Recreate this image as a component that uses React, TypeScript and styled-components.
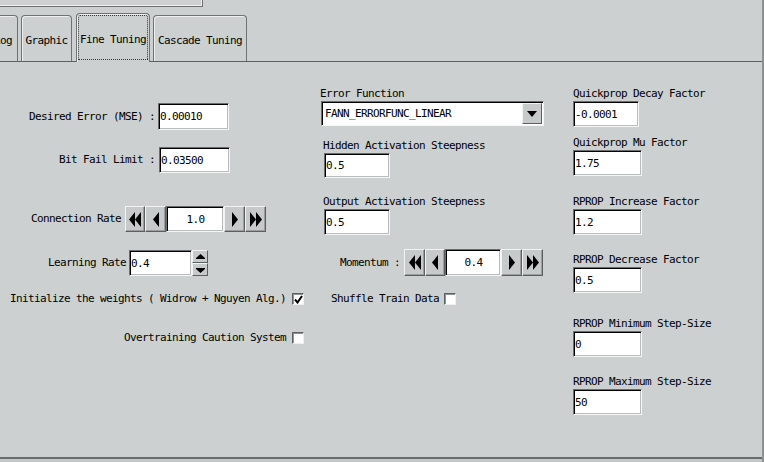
import React from "react";
import styled, { createGlobalStyle } from "styled-components";

const BG = "#ccd0d0";

const GlobalStyle = createGlobalStyle`
  html, body { margin: 0; padding: 0; background: ${BG}; }
  body {
    font-family: "DejaVu Sans Mono", "Liberation Mono", monospace;
    font-size: 11px;
    letter-spacing: -0.62px;
    color: #000;
  }
`;

const Window = styled.div`
  width: 764px;
  height: 462px;
  box-sizing: border-box;
  border-right: 2px solid #8d9191;
  display: flex;
  flex-direction: column;
  overflow: hidden;
  background: ${BG};
`;

const TopBox = styled.div`
  flex: none;
  width: 203px;
  height: 7px;
  box-sizing: border-box;
  border-right: 1px solid #6e7070;
  border-bottom: 1px solid #6e7070;
  box-shadow: inset -1px -1px 0 #eef0f0;
`;

const TabBar = styled.div`
  flex: none;
  height: 54px;
  display: flex;
  align-items: flex-end;
`;

const Tab = styled.div<{ $active?: boolean; $w: number; $ml: number }>`
  flex: none;
  box-sizing: border-box;
  width: ${(p) => p.$w}px;
  margin-left: ${(p) => p.$ml}px;
  height: ${(p) => (p.$active ? 49 : 46)}px;
  margin-bottom: ${(p) => (p.$active ? -1 : 0)}px;
  padding-top: ${(p) => (p.$active ? 2 : 3)}px;
  border: 1px solid #6f7272;
  border-bottom: none;
  border-radius: 4px 4px 0 0;
  box-shadow: inset 1px 1px 0 #eef0f0;
  background: ${BG};
  display: flex;
  align-items: center;
  justify-content: center;
  white-space: nowrap;
  position: relative;
  z-index: ${(p) => (p.$active ? 1 : 0)};
  outline: ${(p) => (p.$active ? "1px dotted #333" : "none")};
  outline-offset: -3px;
`;

const Panel = styled.div`
  flex: none;
  height: 398px;
  box-sizing: border-box;
  border-top: 1px solid #5d6060;
  border-bottom: 2px solid #696c6c;
  display: flex;
  align-items: flex-start;
`;

const BottomStrip = styled.div`
  flex: 1;
  background: #c4c8c8;
`;

const Column = styled.div<{ $w?: number }>`
  display: flex;
  flex-direction: column;
  align-items: flex-start;
  flex: ${(p) => (p.$w ? "none" : "1")};
  width: ${(p) => (p.$w ? `${p.$w}px` : "auto")};
`;

const Row = styled.div<{ $mt: number; $ml: number; $gap: number; $h: number }>`
  display: flex;
  align-items: center;
  margin-top: ${(p) => p.$mt}px;
  margin-left: ${(p) => p.$ml}px;
  gap: ${(p) => p.$gap}px;
  height: ${(p) => p.$h}px;
`;

const Label = styled.span`
  white-space: pre;
  line-height: 12px;
`;

const Field = styled.div<{ $mt: number; $ml: number }>`
  display: flex;
  flex-direction: column;
  align-items: flex-start;
  gap: 1px;
  margin-top: ${(p) => p.$mt}px;
  margin-left: ${(p) => p.$ml}px;
`;

const FieldLabel = styled.div`
  height: 12px;
  line-height: 12px;
  white-space: pre;
`;

const TextBox = styled.input.attrs({ readOnly: true, type: "text" })<{
  $w: number;
  $h: number;
  $center?: boolean;
}>`
  box-sizing: border-box;
  width: ${(p) => p.$w}px;
  height: ${(p) => p.$h}px;
  margin: 0;
  padding: 0 0 0 1px;
  font: inherit;
  letter-spacing: inherit;
  color: #000;
  background: #fff;
  border: 1px solid;
  border-color: #6a6d6d #f5f7f7 #f5f7f7 #6a6d6d;
  box-shadow: inset 1px 1px 0 #000, inset -1px -1px 0 #b8bcbc;
  outline: none;
  text-align: ${(p) => (p.$center ? "center" : "left")};
`;

const Counter = styled.div<{ $h: number }>`
  display: flex;
  height: ${(p) => p.$h}px;
`;

const RaisedBtn = styled.div<{ $w: number }>`
  box-sizing: border-box;
  width: ${(p) => p.$w}px;
  height: 100%;
  background: #c6caca;
  border: 1px solid;
  border-color: #f2f4f4 #5c5f5f #5c5f5f #f2f4f4;
  box-shadow: inset -1px -1px 0 #9a9e9e;
  display: flex;
  align-items: center;
  justify-content: center;
`;

const Spinner = styled.div`
  display: flex;
  flex-direction: column;
  width: 16px;
  height: 26px;
  margin-left: -3px;
`;

const SpinBtn = styled.div`
  flex: 1;
  box-sizing: border-box;
  background: #c6caca;
  border: 1px solid;
  border-color: #f2f4f4 #5c5f5f #5c5f5f #f2f4f4;
  display: flex;
  align-items: center;
  justify-content: center;
`;

const Choice = styled.div`
  box-sizing: border-box;
  width: 223px;
  height: 25px;
  margin-left: 1px;
  background: #fff;
  border: 1px solid;
  border-color: #6a6d6d #f5f7f7 #f5f7f7 #6a6d6d;
  box-shadow: inset 1px 1px 0 #000;
  display: flex;
  align-items: center;
  justify-content: space-between;
  padding: 1px 1px 1px 3px;
`;

const ChoiceText = styled.span`
  white-space: pre;
`;

const ChoiceBtn = styled.div`
  box-sizing: border-box;
  width: 20px;
  height: 21px;
  background: #c6caca;
  border: 1px solid;
  border-color: #f2f4f4 #5c5f5f #5c5f5f #f2f4f4;
  display: flex;
  align-items: center;
  justify-content: center;
`;

const Indented = styled.div`
  margin-left: 1px;
`;

const CheckBox = styled.div`
  box-sizing: border-box;
  width: 12px;
  height: 12px;
  background: #fff;
  border: 1px solid;
  border-color: #5e6161 #eef0f0 #eef0f0 #5e6161;
  box-shadow: inset 1px 1px 0 #8e9292;
  display: flex;
  align-items: center;
  justify-content: center;
`;

const DoubleLeft = () => (
  <svg width="12" height="15" viewBox="0 0 12 15">
    <polygon points="6,0 6,15 0,7.5" fill="#000" />
    <polygon points="12,0 12,15 6,7.5" fill="#000" />
  </svg>
);
const SingleLeft = () => (
  <svg width="6" height="15" viewBox="0 0 6 15">
    <polygon points="6,0 6,15 0,7.5" fill="#000" />
  </svg>
);
const SingleRight = () => (
  <svg width="6" height="15" viewBox="0 0 6 15">
    <polygon points="0,0 0,15 6,7.5" fill="#000" />
  </svg>
);
const DoubleRight = () => (
  <svg width="12" height="15" viewBox="0 0 12 15">
    <polygon points="0,0 0,15 6,7.5" fill="#000" />
    <polygon points="6,0 6,15 12,7.5" fill="#000" />
  </svg>
);
const UpTri = () => (
  <svg width="9" height="6" viewBox="0 0 9 6">
    <polygon points="0,4 4.5,0 9,4" fill="#000" />
    <rect x="0" y="4" width="9" height="1" fill="#000" />
  </svg>
);
const DownTri = () => (
  <svg width="9" height="6" viewBox="0 0 9 6">
    <rect x="0" y="1" width="9" height="1" fill="#000" />
    <polygon points="0,2 4.5,6 9,2" fill="#000" />
  </svg>
);
const ChoiceTri = () => (
  <svg width="10" height="6" viewBox="0 0 10 6">
    <polygon points="0,0 10,0 5,6" fill="#000" />
  </svg>
);
const Tick = () => (
  <svg width="9" height="9" viewBox="0 0 9 9">
    <polyline points="1,4.5 3.5,7.5 8,1" fill="none" stroke="#000" strokeWidth="2" />
  </svg>
);

type CounterProps = { value: string; widths: [number, number, number, number, number]; h: number };
const CounterField = ({ value, widths, h }: CounterProps) => (
  <Counter $h={h}>
    <RaisedBtn $w={widths[0]}>
      <DoubleLeft />
    </RaisedBtn>
    <RaisedBtn $w={widths[1]}>
      <SingleLeft />
    </RaisedBtn>
    <TextBox $w={widths[2]} $h={h} $center value={value} />
    <RaisedBtn $w={widths[3]}>
      <SingleRight />
    </RaisedBtn>
    <RaisedBtn $w={widths[4]}>
      <DoubleRight />
    </RaisedBtn>
  </Counter>
);

type RightField = { label: string; value: string; mt: number; w: number };
const rightFields: RightField[] = [
  { label: "Quickprop Decay Factor", value: "-0.0001", mt: 26, w: 66 },
  { label: "Quickprop Mu Factor", value: "1.75", mt: 10, w: 69 },
  { label: "RPROP Increase Factor", value: "1.2", mt: 20, w: 69 },
  { label: "RPROP Decrease Factor", value: "0.5", mt: 19, w: 69 },
  { label: "RPROP Minimum Step-Size", value: "0", mt: 25, w: 69 },
  { label: "RPROP Maximum Step-Size", value: "50", mt: 19, w: 69 },
];

export default function App() {
  return (
    <>
      <GlobalStyle />
      <Window>
        <TopBox />
        <TabBar>
          <Tab $w={30} $ml={-12}>Log</Tab>
          <Tab $w={51} $ml={3}>Graphic</Tab>
          <Tab $w={74} $ml={4} $active>Fine Tuning</Tab>
          <Tab $w={94} $ml={3}>Cascade Tuning</Tab>
        </TabBar>
        <Panel>
          <Column $w={310}>
            <Row $mt={41} $ml={29} $gap={3} $h={27}>
              <Label>Desired Error (MSE) :</Label>
              <TextBox $w={71} $h={27} value="0.00010" />
            </Row>
            <Row $mt={17} $ml={59} $gap={4} $h={26}>
              <Label>Bit Fail Limit :</Label>
              <TextBox $w={71} $h={26} value="0.03500" />
            </Row>
            <Row $mt={33} $ml={31} $gap={4} $h={26}>
              <Label>Connection Rate</Label>
              <CounterField value="1.0" widths={[20, 21, 58, 21, 21]} h={26} />
            </Row>
            <Row $mt={18} $ml={48} $gap={3} $h={26}>
              <Label>Learning Rate</Label>
              <TextBox $w={63} $h={26} value="0.4" />
              <Spinner>
                <SpinBtn>
                  <UpTri />
                </SpinBtn>
                <SpinBtn>
                  <DownTri />
                </SpinBtn>
              </Spinner>
            </Row>
            <Row $mt={17} $ml={10} $gap={6} $h={12}>
              <Label>Initialize the weights ( Widrow + Nguyen Alg.)</Label>
              <CheckBox>
                <Tick />
              </CheckBox>
            </Row>
            <Row $mt={27} $ml={124} $gap={6} $h={12}>
              <Label>Overtraining Caution System</Label>
              <CheckBox />
            </Row>
          </Column>
          <Column $w={253}>
            <Field $mt={26} $ml={10}>
              <FieldLabel>Error Function</FieldLabel>
              <Choice>
                <ChoiceText>FANN_ERRORFUNC_LINEAR</ChoiceText>
                <ChoiceBtn>
                  <ChoiceTri />
                </ChoiceBtn>
              </Choice>
            </Field>
            <Field $mt={14} $ml={13}>
              <FieldLabel>Hidden Activation Steepness</FieldLabel>
              <Indented>
                <TextBox $w={66} $h={25} value="0.5" />
              </Indented>
            </Field>
            <Field $mt={18} $ml={13}>
              <FieldLabel>Output Activation Steepness</FieldLabel>
              <Indented>
                <TextBox $w={66} $h={26} value="0.5" />
              </Indented>
            </Field>
            <Row $mt={14} $ml={30} $gap={4} $h={27}>
              <Label>Momentum :</Label>
              <CounterField value="0.4" widths={[21, 20, 56, 21, 21]} h={27} />
            </Row>
            <Row $mt={17} $ml={21} $gap={5} $h={12}>
              <Label>Shuffle Train Data</Label>
              <CheckBox />
            </Row>
          </Column>
          <Column>
            {rightFields.map((f) => (
              <Field key={f.label} $mt={f.mt} $ml={10}>
                <FieldLabel>{f.label}</FieldLabel>
                <TextBox $w={f.w} $h={26} value={f.value} />
              </Field>
            ))}
          </Column>
        </Panel>
        <BottomStrip />
      </Window>
    </>
  );
}
